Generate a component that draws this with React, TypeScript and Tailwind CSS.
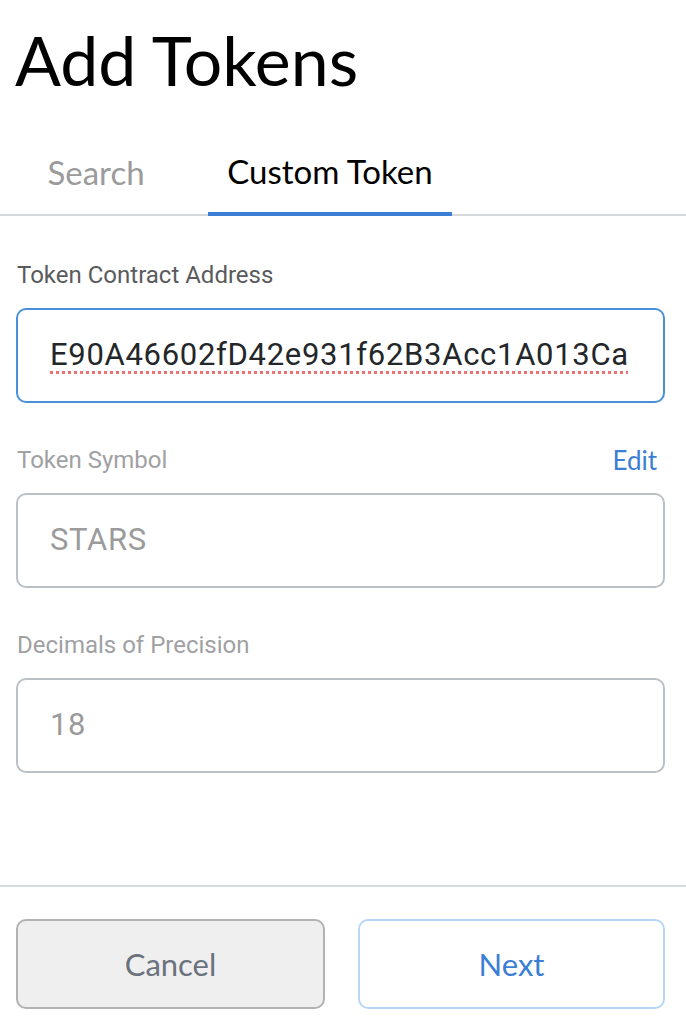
const Field = ({ label, value, active, right }: { label: string; value: string; active?: boolean; right?: string }) => {
    return (
        <div className="pl-4 pr-[21px]">
            <div className="flex justify-between items-center h-[24px] px-[1px]">
                <p className={`text-[24px] ${active ? "text-[#5a5b5c]" : "text-[#9fa1a3]"}`} style={{ fontFamily: "Roboto, sans-serif" }}>{label}</p>
                {right && <p className="text-[26px] text-[#3b7ed6] pr-[7px]" style={{ fontFamily: "Lato, sans-serif" }}>{right}</p>}
            </div>
            <div
                className={`mt-[21px] h-[95px] rounded-[10px] flex items-center px-[32px] bg-white ${active ? "border-2 border-[#4a90d9]" : "border-2 border-[#bbc0c5]"}`}
            >
                <span
                    className={`text-[31px] tracking-[0.7px] ${active ? "text-[#24272a] underline decoration-dotted decoration-[#f06f6f] decoration-[3px] underline-offset-[6px]" : "text-[#9b9b9b]"}`}
                    style={{ fontFamily: "Roboto, sans-serif" }}
                >
                    {value}
                </span>
            </div>
        </div>
    )
}

const App = () => {
    return (
        <div className="w-[686px] h-[1034px] bg-white flex flex-col overflow-hidden">

            <div className="h-[122px] flex items-end pl-[15px] pb-[28px]">
                <h1 className="text-[68px] leading-none text-black" style={{ fontFamily: "Lato, sans-serif" }}>Add Tokens</h1>
            </div>

            <div className="flex border-b-2 border-[#d6d9dc] h-[94px]" style={{ fontFamily: "Lato, sans-serif" }}>
                <div className="w-[192px] flex items-center justify-center pt-[10px] text-[33px] text-[#9b9b9b]">Search</div>
                <div className="ml-[16px] w-[244px] flex items-center justify-center pt-[10px] text-[33px] text-black border-b-[4px] border-[#3b7ed6] mb-[-2px]">Custom Token</div>
            </div>

            <div className="flex flex-col gap-[45px] pt-[47px]">
                <Field label="Token Contract Address" value="E90A46602fD42e931f62B3Acc1A013Ca" active />
                <Field label="Token Symbol" value="STARS" right="Edit" />
                <Field label="Decimals of Precision" value="18" />
            </div>

            <div className="mt-auto border-t-2 border-[#d6d9dc] h-[149px] pl-4 pr-[21px] pt-[32px] flex gap-[33px]" style={{ fontFamily: "Lato, sans-serif" }}>
                <button className="w-[310px] h-[90px] rounded-[10px] bg-[#efefef] border-2 border-[#b2b2b2] text-[31px] text-[#6a737d]">Cancel</button>
                <button className="w-[308px] h-[90px] rounded-[10px] bg-white border-2 border-[#b9d6f5] text-[31px] text-[#3b7ed6]">Next</button>
            </div>
        </div>
    )
}

export default App;
